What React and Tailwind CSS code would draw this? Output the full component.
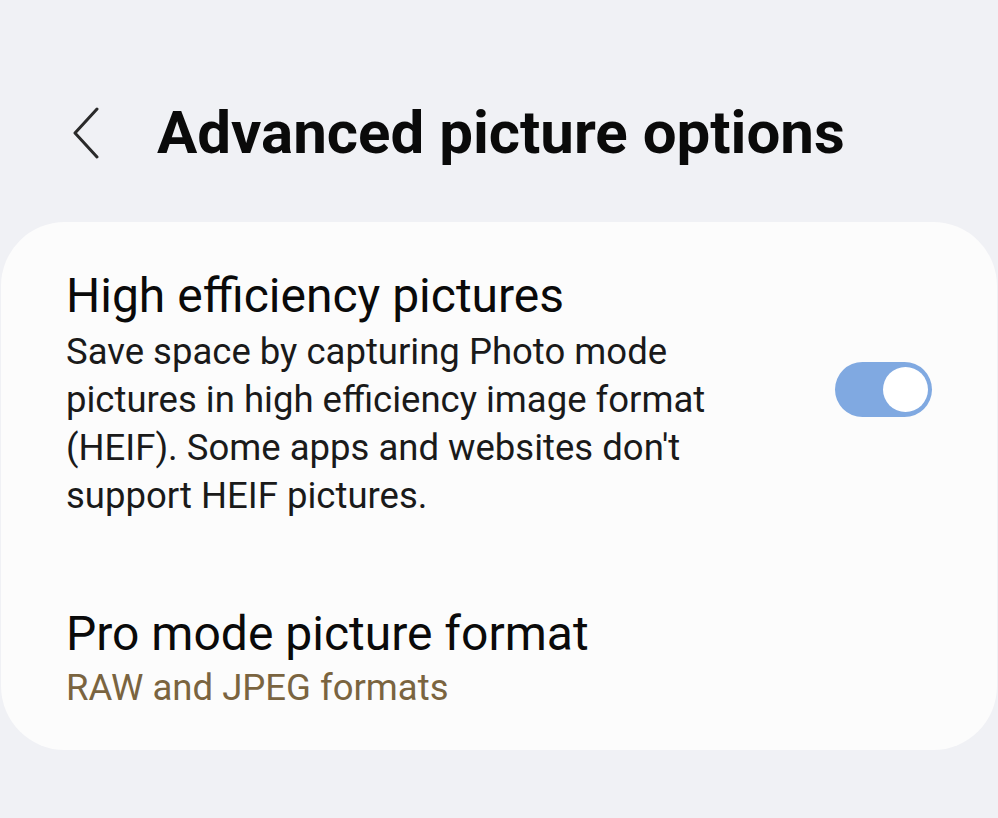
export default function App() {
  return (
    <div className="w-[998px] h-[818px] bg-[#f0f1f5] overflow-hidden" style={{ fontFamily: 'Roboto, "Noto Sans", sans-serif' }}>
      <div className="flex items-center h-[222px] pt-[44px] pl-[72px]">
        <svg width="28" height="52" viewBox="0 0 28 52" className="shrink-0">
          <path d="M25 2 L3 26 L25 50" fill="none" stroke="#2a2a2a" strokeWidth="3" strokeLinecap="round" strokeLinejoin="round" />
        </svg>
        <h1 className="ml-[57px] text-[60px] font-bold text-[#0a0a0a] leading-none">Advanced picture options</h1>
      </div>
      <div className="mx-[1px] h-[528px] bg-[#fcfcfc] rounded-[64px] pl-[65px] pr-[65px] pt-[46px]">
        <div className="flex items-start">
          <div className="flex-1">
            <div className="text-[48px] leading-[56px] text-[#0a0a0a]">High efficiency pictures</div>
            <div className="mt-[4px] text-[36.5px] leading-[48px] text-[#1a1a1a] w-[700px]">
              Save space by capturing Photo mode pictures in high efficiency image format (HEIF). Some apps and websites don't support HEIF pictures.
            </div>
          </div>
          <div className="w-[97px] h-[55px] rounded-full bg-[#80a9e1] flex items-center justify-end pr-[4px] mt-[94px] shrink-0">
            <div className="w-[45px] h-[45px] rounded-full bg-white"></div>
          </div>
        </div>
        <div className="mt-[86px]">
          <div className="text-[48px] leading-[56px] text-[#0a0a0a]">Pro mode picture format</div>
          <div className="mt-[2px] text-[36.5px] leading-[48px] text-[#7a6440]">RAW and JPEG formats</div>
        </div>
      </div>
    </div>
  );
}
